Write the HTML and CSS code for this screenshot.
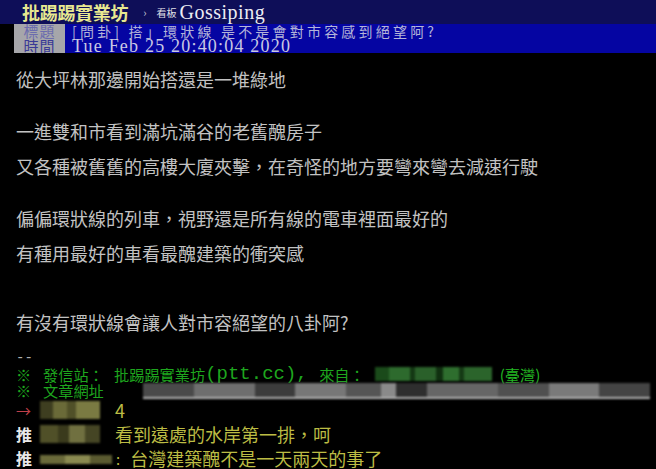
FILE: index.html
```html
<!DOCTYPE html>
<html lang="zh-Hant">
<head>
<meta charset="UTF-8">
<title>[問卦] 搭」環狀線 是不是會對市容感到絕望阿? - 看板 Gossiping - 批踢踢實業坊</title>
<link rel="stylesheet" href="styles.css">
</head>
<body>
<div class="topbar">
  <span class="site">批踢踢實業坊</span>
  <span class="sep">›</span>
  <span class="boardlabel">看板</span>
  <span class="board">Gossiping</span>
</div>

<div class="meta">
  <div class="metarow">
    <span class="tag tag-faded">標題</span>
    <span class="val title">[問卦] 搭」環狀線 是不是會對市容感到絕望阿?</span>
  </div>
  <div class="metarow">
    <span class="tag">時間</span>
    <span class="val time">Tue Feb 25 20:40:04 2020</span>
  </div>
</div>

<div class="content">
  <div class="line">從大坪林那邊開始搭還是一堆綠地</div>
  <div class="blank"></div>
  <div class="line">一進雙和市看到滿坑滿谷的老舊醜房子</div>
  <div class="line">又各種被舊舊的高樓大廈夾擊，在奇怪的地方要彎來彎去減速行駛</div>
  <div class="blank"></div>
  <div class="line">偏偏環狀線的列車，視野還是所有線的電車裡面最好的</div>
  <div class="line">有種用最好的車看最醜建築的衝突感</div>
  <div class="blank"></div>
  <div class="blank"></div>
  <div class="line">有沒有環狀線會讓人對市容絕望的八卦阿?</div>
</div>

<div class="sig">
  <div class="sigline dash">--</div>
  <div class="sigline green">
    <span class="kome">※</span>
    <span class="label">發信站：</span>
    <span class="site-name">批踢踢實業坊</span><span class="mono">(ptt.cc), </span><span class="from">來自：</span>
    <span class="mask mask-ip"></span>
    <span class="region">(臺灣)</span>
  </div>
  <div class="sigline green">
    <span class="kome">※</span>
    <span class="label">文章網址</span>
    <span class="mask mask-url"></span>
  </div>
</div>

<div class="pushes">
  <div class="push">
    <span class="ptag arrow">→</span>
    <span class="mask mask-id"></span>
    <span class="pmsg">4</span>
  </div>
  <div class="push">
    <span class="ptag">推</span>
    <span class="mask mask-id mask-id2"></span>
    <span class="pmsg">看到遠處的水岸第一排，呵</span>
  </div>
  <div class="push">
    <span class="ptag">推</span>
    <span class="mask mask-thin"></span>
    <span class="pmsg colon">:</span>
    <span class="pmsg">台灣建築醜不是一天兩天的事了</span>
  </div>
</div>
</body>
</html>
```

FILE: styles.css
```css
body {
  margin: 0;
  background: #000;
  color: #c2c2c2;
  font-family: "Noto Sans CJK TC", "Noto Sans", sans-serif;
  overflow: hidden;
}

/* top board bar */
.topbar {
  height: 24px;
  background: #0e0e58;
  display: flex;
  align-items: center;
  padding-left: 22px;
  white-space: nowrap;
}
.site {
  color: #e8e890;
  font-size: 18px;
  font-weight: 700;
  line-height: 24px;
  letter-spacing: -0.3px;
}
.sep {
  color: #c8c8d8;
  font-size: 11px;
  margin-left: 15px;
}
.boardlabel {
  color: #e0e0e8;
  font-size: 10px;
  margin-left: 10px;
}
.board {
  color: #ececf4;
  font-family: "Liberation Serif", serif;
  font-size: 20px;
  line-height: 24px;
  margin-left: 3px;
  letter-spacing: 0.5px;
}

/* article header rows */
.meta {
  margin-left: 14px;
  background: #0505a2;
}
.metarow {
  height: 14.5px;
  display: flex;
  overflow: hidden;
  white-space: nowrap;
}
.tag {
  width: 51px;
  flex: none;
  background: #a6a6aa;
  color: #3a3a96;
  font-size: 15px;
  line-height: 14.5px;
  text-align: center;
  letter-spacing: 1px;
}
.tag-faded {
  color: #6c6cae;
}
.val {
  margin-left: 7px;
  color: #c9c9e4;
}
.title {
  font-size: 14px;
  line-height: 14.5px;
  color: #b4b4d8;
  letter-spacing: 3.2px;
}
.time {
  font-family: "Liberation Serif", serif;
  font-size: 18px;
  line-height: 14.5px;
  letter-spacing: 1.2px;
}

/* article body */
.content {
  padding: 9px 0 0 16px;
}
.line {
  font-size: 18px;
  line-height: 35px;
  white-space: nowrap;
}
.blank {
  height: 17px;
}

/* signature */
.sig {
  margin-top: 10px;
  padding-left: 16px;
}
.sigline {
  font-size: 15.2px;
  line-height: 16px;
  height: 16px;
  white-space: nowrap;
  display: flex;
  align-items: center;
}
.dash {
  color: #b0b0b0;
  font-family: "Liberation Mono", monospace;
  font-size: 14px;
}
.green {
  color: #1ea61e;
}
.kome {
  width: 27px;
  flex: none;
}
.label {
  width: 71px;
  flex: none;
}
.mono {
  font-family: "Liberation Mono", monospace;
  font-size: 19px;
  white-space: pre;
}
.region {
  color: #23b823;
  margin-left: 8px;
}

/* blurred personal data */
.mask {
  display: inline-block;
  filter: blur(1px);
}
.mask-ip {
  width: 117px;
  height: 14px;
  margin-left: 10px;
  background: linear-gradient(90deg, #1a4a1a 0 12%, #2d6a2d 12% 30%, #143814 30% 34%, #2a602a 34% 52%, #103010 52% 58%, #2e6e2e 58% 72%, #153a15 72% 76%, #2b642b 76% 100%);
}
.mask-url {
  width: 507px;
  height: 14px;
  margin-left: 29px;
  margin-top: 2px;
  background: linear-gradient(90deg, #4a4a4a 0 10%, #6e6e6e 10% 22%, #3c3c3c 22% 30%, #777 30% 40%, #555 40% 47%, #8a8a8a 47% 50%, #2e2e2e 50% 56%, #666 56% 70%, #505050 70% 80%, #7a7a7a 80% 90%, #444 90% 100%);
  border-bottom: 2px solid #b4b4b4;
}

/* pushes */
.pushes {
  padding-left: 16px;
}
.push {
  height: 24px;
  display: flex;
  align-items: center;
  white-space: nowrap;
}
.ptag {
  width: 24px;
  flex: none;
  color: #e8e8e8;
  font-size: 16px;
  font-weight: 700;
}
.arrow {
  color: #c0404a;
  font-weight: 400;
  font-size: 15px;
}
.mask-id {
  width: 60px;
  height: 18px;
  background: linear-gradient(90deg, #3e3e20 0 22%, #6a6a38 22% 45%, #505028 45% 60%, #7a7a42 60% 100%);
}
.mask-id2 {
  background: linear-gradient(90deg, #505028 0 30%, #3a3a1c 30% 48%, #707040 48% 75%, #454524 75% 100%);
}
.mask-thin {
  width: 72px;
  height: 9px;
  margin-top: 3px;
  background: linear-gradient(90deg, #6a6a3a 0 35%, #8a8a50 35% 70%, #5a5a30 70% 100%);
}
.pmsg {
  color: #bcbc44;
  font-size: 18px;
  margin-left: 15px;
}
.colon {
  margin-left: 4px;
  font-size: 15px;
}
.colon + .pmsg {
  margin-left: 10px;
}
```
